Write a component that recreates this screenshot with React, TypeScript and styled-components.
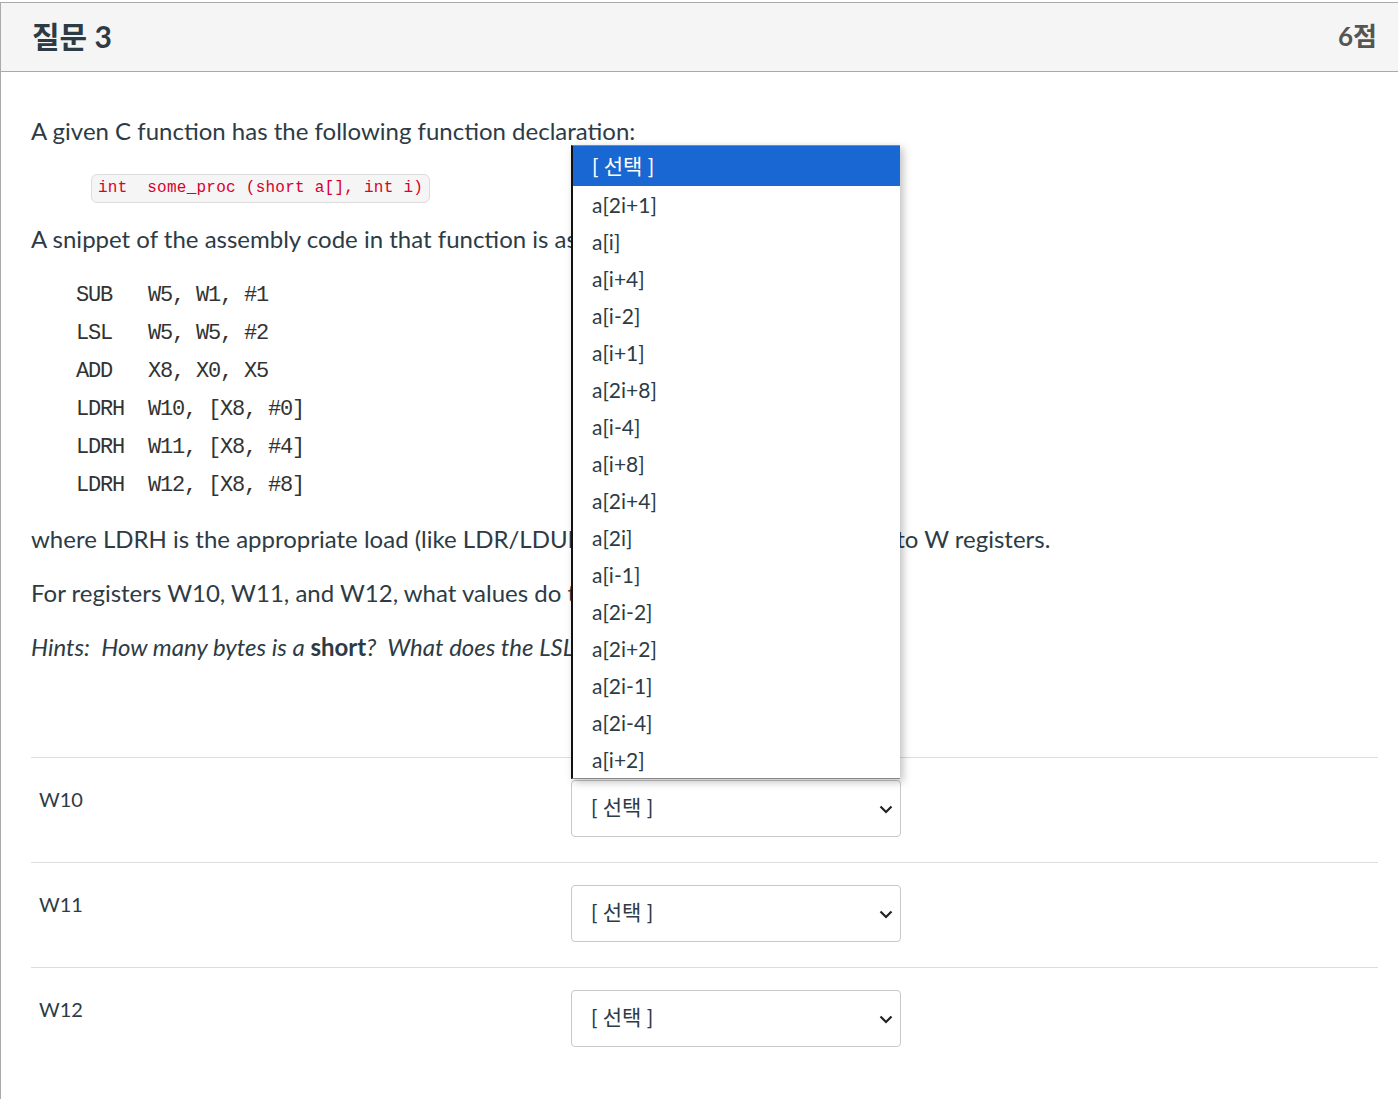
import styled, { createGlobalStyle } from "styled-components"

const Global = createGlobalStyle`
    html, body {
        margin: 0;
        padding: 0;
        background: #fff;
        overflow: hidden;
    }
    body {
        font-family: Lato, "Noto Sans CJK KR", sans-serif;
        color: #2d3b45;
    }
`

// CAIXA DA QUESTAO
const Questao = styled.div`
    margin-top: 2px;
    width: calc(100% + 10px);
    border: 1px solid #aaa;
    height: 1110px;
`
const Cabecalho = styled.div`
    height: 69px;
    box-sizing: border-box;
    background: #f5f5f5;
    border-bottom: 1px solid #aaa;
    display: flex;
    align-items: center;
    justify-content: space-between;
    padding: 0 32px 5px 31px;
`
const Titulo = styled.h2`
    margin: 0;
    font-size: 30px;
    font-weight: 700;
    color: #2d3b45;
    font-family: Lato, "Noto Sans CJK KR", sans-serif;
`
const Pontos = styled.span`
    font-size: 26px;
    font-weight: 700;
    color: #555;
`

const Conteudo = styled.div`
    position: relative;
    padding: 43px 31px 0 30px;
`
const Paragrafo = styled.p<{ $italico?: boolean }>`
    margin: 0 0 22px;
    font-size: 24px;
    line-height: 32px;
    font-style: ${(p) => (p.$italico ? "italic" : "normal")};
    white-space: nowrap;
`
const Apertado = styled.span`
    letter-spacing: -0.75px;
`
const CodigoLinha = styled.div`
    margin: 27px 0 20px 60px;
    display: inline-block;
    font-family: "Liberation Mono", monospace;
    font-size: 16px;
    letter-spacing: 0.25px;
    line-height: 27px;
    color: #d8002c;
    background: #f5f5f5;
    border: 1px solid #dcdcdc;
    border-radius: 6px;
    padding: 0 6px;
    white-space: pre;
`
const Assembly = styled.pre`
    margin: 22px 0 18px 45px;
    font-family: "Liberation Mono", monospace;
    font-size: 22px;
    letter-spacing: -1.2px;
    line-height: 38px;
    color: #333;
`

const Respostas = styled.div`
    margin-top: 94px;
`
const Linha = styled.div`
    display: flex;
    border-top: 1px solid #ddd;
    height: 104px;
`
const Rotulo = styled.div`
    width: 532px;
    padding: 28px 0 0 8px;
    font-size: 20px;
    line-height: 26px;
`
const SelectCaixa = styled.div`
    margin-top: 22px;
    width: 330px;
    height: 57px;
    box-sizing: border-box;
    border: 1px solid #c8c8c8;
    border-radius: 4px;
    display: flex;
    align-items: center;
    justify-content: space-between;
    padding: 0 6px 6px 19px;
    font-size: 21px;
    color: #2d3b45;

    svg {
        margin-top: 6px;
    }
`

// LISTA ABERTA
const Lista = styled.ul`
    position: absolute;
    left: 570px;
    top: 73px;
    width: 327px;
    margin: 0;
    padding: 0;
    list-style: none;
    background: #fff;
    border-left: 2px solid #111;
    border-top: 1px solid #888;
    border-bottom: 1px solid #888;
    box-shadow: 3px 3px 8px rgba(0, 0, 0, 0.25);
`
const Item = styled.li<{ $ativo?: boolean }>`
    height: ${(p) => (p.$ativo ? "40px" : "37px")};
    line-height: ${(p) => (p.$ativo ? "40px" : "37px")};
    padding-left: 19px;
    font-size: 21px;
    background: ${(p) => (p.$ativo ? "#1967d2" : "#fff")};
    color: ${(p) => (p.$ativo ? "#fff" : "#2d3b45")};
`

const opcoes = [
    "a[2i+1]", "a[i]", "a[i+4]", "a[i-2]", "a[i+1]", "a[2i+8]", "a[i-4]", "a[i+8]",
    "a[2i+4]", "a[2i]", "a[i-1]", "a[2i-2]", "a[2i+2]", "a[2i-1]", "a[2i-4]", "a[i+2]",
]

function Seta() {
    return (
        <svg width="16" height="16" viewBox="0 0 16 16">
            <path d="M2.5 5.5 L8 11 L13.5 5.5" fill="none" stroke="#222" strokeWidth="2.2" />
        </svg>
    )
}

function App() {
    return (
        <>
            <Global />
            <Questao>
                <Cabecalho>
                    <Titulo>질문 3</Titulo>
                    <Pontos>6점</Pontos>
                </Cabecalho>
                <Conteudo>
                    <Paragrafo style={{ marginBottom: 0 }}>A given C function has the following function declaration:</Paragrafo>
                    <CodigoLinha>{"int  some_proc (short a[], int i)"}</CodigoLinha>
                    <Paragrafo style={{ marginBottom: 0 }}>A snippet of the assembly code in that function is as follows:</Paragrafo>
                    <Assembly>{`SUB   W5, W1, #1
LSL   W5, W5, #2
ADD   X8, X0, X5
LDRH  W10, [X8, #0]
LDRH  W11, [X8, #4]
LDRH  W12, [X8, #8]`}</Assembly>
                    <Paragrafo>
                        where LDRH is the appropriate load (like LDR/LDUR but for <Apertado>unsigned</Apertado> halfwords) into W registers.
                    </Paragrafo>
                    <Paragrafo>For registers W10, W11, and W12, what values do they hold?</Paragrafo>
                    <Paragrafo $italico>
                        Hints:&nbsp; How many bytes is a <b style={{ fontStyle: "normal" }}>short</b>?&nbsp; What does the LSL instruction do?
                    </Paragrafo>

                    <Respostas>
                        {["W10", "W11", "W12"].map((r) => (
                            <Linha key={r}>
                                <Rotulo>{r}</Rotulo>
                                <SelectCaixa>
                                    <span>[ 선택 ]</span>
                                    <Seta />
                                </SelectCaixa>
                            </Linha>
                        ))}
                    </Respostas>

                    <Lista>
                        <Item $ativo>[ 선택 ]</Item>
                        {opcoes.map((o) => (
                            <Item key={o}>{o}</Item>
                        ))}
                    </Lista>
                </Conteudo>
            </Questao>
        </>
    )
}

export default App
